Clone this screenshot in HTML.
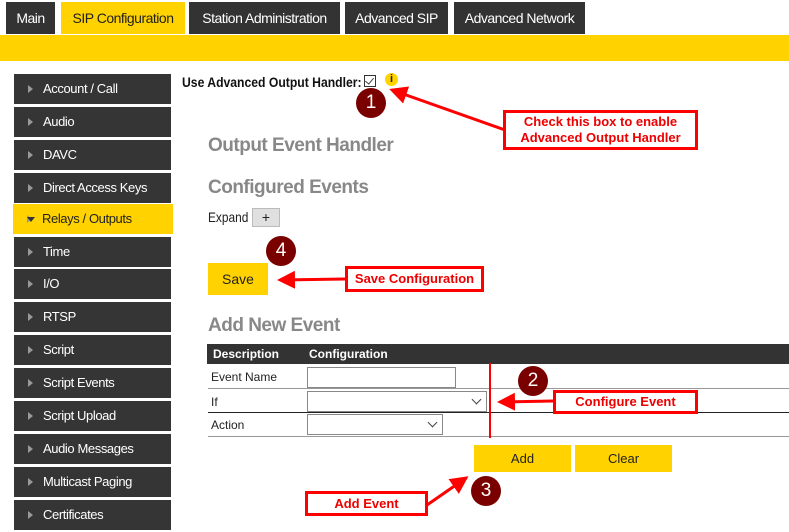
<!DOCTYPE html>
<html><head><meta charset="utf-8"><style>
*{margin:0;padding:0;box-sizing:border-box}
body{width:789px;height:532px;background:#fff;position:relative;overflow:hidden;font-family:"Liberation Sans",sans-serif;font-size:13px;color:#222}
.a{position:absolute}
.tab{position:absolute;top:2px;height:32px;background:#333;color:#fff;font-size:14px;line-height:32px;text-align:center;letter-spacing:-0.5px}
.side{position:absolute;left:14px;width:157px;height:30px;background:#353535;color:#fff;font-size:13px;line-height:30px;padding-left:29px;letter-spacing:-0.4px}
.side:before{content:"";position:absolute;left:14px;top:11px;border-left:5px solid #999;border-top:4px solid transparent;border-bottom:4px solid transparent}
.h{position:absolute;left:208px;color:#888;font-weight:bold;font-size:19px;letter-spacing:-0.5px}
.y{background:#ffd200}
.circ{position:absolute;width:30px;height:30px;border-radius:50%;background:#7a0000;color:#fff;font-size:19px;line-height:30px;text-align:center}
.box{position:absolute;border:3px solid #f00;background:#fff;color:#e00;font-weight:bold;font-size:13px;text-align:center}
.sel{position:absolute;border:1px solid #888;background:#fff;height:21px}
.sel:after{content:"";position:absolute;right:6px;top:4px;width:6px;height:6px;border-right:1px solid #444;border-bottom:1px solid #444;transform:rotate(45deg)}
.row{position:absolute;left:208px;width:581px;border-bottom:1px solid #999}
.sx{transform-origin:0 0;white-space:nowrap}
</style></head><body>
<div class="tab" style="left:6px;width:49px">Main</div>
<div class="tab y" style="left:61px;width:124px;color:#222">SIP Configuration</div>
<div class="tab" style="left:189px;width:151px">Station Administration</div>
<div class="tab" style="left:345px;width:103px">Advanced SIP</div>
<div class="tab" style="left:454px;width:131px">Advanced Network</div>
<div class="a y" style="left:0;top:35px;width:789px;height:26px"></div>

<div class="side" style="top:74px">Account / Call</div>
<div class="side" style="top:107px">Audio</div>
<div class="side" style="top:140px">DAVC</div>
<div class="side" style="top:173px">Direct Access Keys</div>
<div class="side y" style="top:204px;left:13px;width:160px;color:#222">Relays / Outputs</div>
<div class="a" style="left:27px;top:217px;border-top:5px solid #333;border-left:4px solid transparent;border-right:4px solid transparent"></div>
<div class="side" style="top:237px">Time</div>
<div class="side" style="top:269px">I/O</div>
<div class="side" style="top:302px">RTSP</div>
<div class="side" style="top:335px">Script</div>
<div class="side" style="top:368px">Script Events</div>
<div class="side" style="top:401px">Script Upload</div>
<div class="side" style="top:434px">Audio Messages</div>
<div class="side" style="top:467px">Multicast Paging</div>
<div class="side" style="top:500px">Certificates</div>

<div class="a sx" style="left:182px;top:74px;font-weight:bold;font-size:14px;color:#111;transform:scaleX(0.87)">Use Advanced Output Handler:</div>
<div class="a" style="left:364px;top:75px;width:12px;height:12px;border:1px solid #333;background:#fff"></div>
<div class="a" style="left:367px;top:76px;width:5px;height:8px;border-right:1.5px solid #444;border-bottom:1.5px solid #444;transform:rotate(40deg)"></div>
<div class="a" style="left:385px;top:73px;width:13px;height:13px;border-radius:50%;background:#ffd200;font-size:11px;font-weight:bold;text-align:center;line-height:13px">i</div>

<div class="h" style="top:135px">Output Event Handler</div>
<div class="h" style="top:177px">Configured Events</div>
<div class="a sx" style="left:208px;top:209px;font-size:14px;transform:scaleX(0.85)">Expand</div>
<div class="a" style="left:252px;top:208px;width:28px;height:19px;background:#e0e0e0;border:1px solid #bbb;text-align:center;line-height:17px;font-size:14px">+</div>
<div class="a y" style="left:208px;top:263px;width:60px;height:32px;text-align:center;line-height:32px;font-size:14px">Save</div>
<div class="h" style="top:315px">Add New Event</div>

<div class="a" style="left:207px;top:344px;width:582px;height:20px;background:#333;color:#fff;font-weight:bold;font-size:12px;line-height:20px"><span style="position:absolute;left:6px">Description</span><span style="position:absolute;left:102px">Configuration</span></div>
<div class="row" style="top:364px;height:25px"><span class="a" style="left:3px;top:6px;font-size:12px">Event Name</span></div>
<div class="row" style="top:389px;height:24px;border-bottom-color:#222"><span class="a" style="left:3px;top:6px;font-size:12px">If</span></div>
<div class="row" style="top:413px;height:24px"><span class="a" style="left:3px;top:5px;font-size:12px">Action</span></div>
<div class="a" style="left:307px;top:367px;width:149px;height:21px;border:1px solid #888"></div>
<div class="sel" style="left:307px;top:391px;width:180px"></div>
<div class="sel" style="left:307px;top:414px;width:136px"></div>

<div class="a y" style="left:474px;top:445px;width:97px;height:27px;text-align:center;line-height:27px">Add</div>
<div class="a y" style="left:575px;top:445px;width:97px;height:27px;text-align:center;line-height:27px">Clear</div>

<svg class="a" style="left:0;top:0" width="789" height="532">
<defs><marker id="m" markerWidth="6" markerHeight="6" refX="5" refY="3" orient="auto" markerUnits="strokeWidth"><path d="M0,0 L6,3 L0,6 z" fill="#f00"/></marker></defs>
<g stroke="#f00" stroke-width="3" fill="none">
<line x1="505" y1="130" x2="392" y2="90" marker-end="url(#m)"/>
<line x1="345" y1="279" x2="280" y2="280" marker-end="url(#m)"/>
<line x1="553" y1="401" x2="500" y2="402" marker-end="url(#m)"/>
<line x1="427" y1="505" x2="466" y2="478" marker-end="url(#m)"/>
<line x1="490" y1="363" x2="490" y2="438" stroke-width="2"/>
</g></svg>

<div class="circ" style="left:356px;top:88px">1</div>
<div class="circ" style="left:266px;top:236px">4</div>
<div class="circ" style="left:518px;top:366px">2</div>
<div class="circ" style="left:471px;top:476px">3</div>

<div class="box" style="left:503px;top:110px;width:195px;height:40px;line-height:16px;padding-top:1px">Check this box to enable<br>Advanced Output Handler</div>
<div class="box" style="left:345px;top:266px;width:139px;height:26px;line-height:20px">Save Configuration</div>
<div class="box" style="left:553px;top:390px;width:145px;height:24px;line-height:18px">Configure Event</div>
<div class="box" style="left:305px;top:491px;width:123px;height:25px;line-height:19px">Add Event</div>
</body></html>
